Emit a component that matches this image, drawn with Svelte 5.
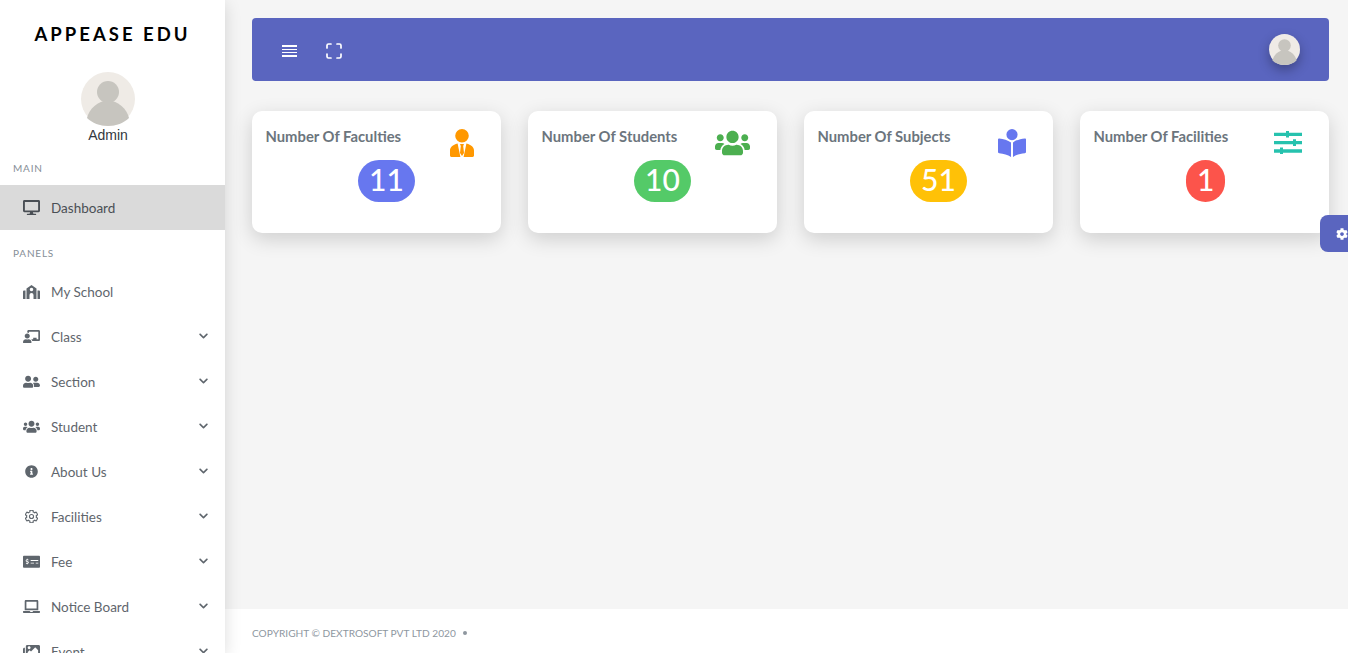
<script>
  // font awesome style shapes, one compound path each
  const icons = {
    desktop: { vb: '0 0 576 512', d: 'M528 0H48C21.5 0 0 21.5 0 48v320c0 26.5 21.5 48 48 48h192l-16 48h-72c-13.3 0-24 10.7-24 24s10.7 24 24 24h272c13.3 0 24-10.7 24-24s-10.7-24-24-24h-72l-16-48h192c26.5 0 48-21.5 48-48V48c0-26.5-21.5-48-48-48zm-16 352H64V64h448v288z' },
    school: { vb: '0 0 34 28', d: 'M0 13a2 2 0 0 1 2-2h3v17H1a1 1 0 0 1-1-1zM29 11h3a2 2 0 0 1 2 2v14a1 1 0 0 1-1 1h-4zM17 0l10 7v21h-6v-8a4 4 0 0 0-8 0v8H7V7zM17 5.500a3.500 3.500 0 1 0 0 7 3.500 3.500 0 0 0 0-7z' },
    teacher: { vb: '0 0 640 512', d: 'M208 352c-2.39 0-4.78.35-7.06 1.09C187.98 357.3 174.35 360 160 360c-14.35 0-27.98-2.7-40.95-6.91-2.28-.74-4.66-1.09-7.05-1.09C49.94 352-.33 402.48 0 464.62.14 490.88 21.73 512 48 512h224c26.27 0 47.86-21.12 48-47.38.33-62.14-49.94-112.62-112-112.62zm-48-32c53.02 0 96-42.98 96-96s-42.98-96-96-96-96 42.98-96 96 42.98 96 96 96zM592 0H208c-26.47 0-48 22.25-48 49.59V96c23.42 0 45.1 6.78 64 17.8V64h352v288h-64v-64H384v64h-76.24c19.1 16.69 33.12 38.73 39.69 64H592c26.47 0 48-22.25 48-49.59V49.59C640 22.25 618.47 0 592 0z' },
    friends: { vb: '0 0 640 512', d: 'M192 256c61.9 0 112-50.1 112-112S253.9 32 192 32 80 82.1 80 144s50.1 112 112 112zm76.8 32h-8.3c-20.8 10-43.9 16-68.5 16s-47.6-6-68.5-16h-8.3C51.6 288 0 339.6 0 403.2V432c0 26.5 21.5 48 48 48h288c26.5 0 48-21.5 48-48v-28.8c0-63.6-51.6-115.2-115.2-115.2zM480 256c53 0 96-43 96-96s-43-96-96-96-96 43-96 96 43 96 96 96zm48 32h-3.8c-13.9 4.8-28.6 8-44.2 8s-30.3-3.2-44.2-8H432c-20.4 0-39.2 5.9-55.7 15.4 24.4 26.3 39.7 61.2 39.7 99.8v38.4c0 2.2-.5 4.3-.6 6.4H592c26.5 0 48-21.5 48-48 0-61.9-50.1-112-112-112z' },
    users: { vb: '0 0 640 512', d: 'M96 224c35.3 0 64-28.7 64-64s-28.7-64-64-64-64 28.7-64 64 28.7 64 64 64zm448 0c35.3 0 64-28.7 64-64s-28.7-64-64-64-64 28.7-64 64 28.7 64 64 64zm32 32h-64c-17.6 0-33.5 7.1-45.1 18.6 40.3 22.1 68.9 62 75.1 109.4h66c17.7 0 32-14.3 32-32v-32c0-35.3-28.7-64-64-64zm-256 0c61.9 0 112-50.1 112-112S381.9 32 320 32 208 82.1 208 144s50.1 112 112 112zm76.8 32h-8.3c-20.8 10-43.9 16-68.5 16s-47.6-6-68.5-16h-8.3C179.6 288 128 339.6 128 403.2V432c0 26.5 21.5 48 48 48h288c26.5 0 48-21.5 48-48v-28.8c0-63.6-51.6-115.2-115.2-115.2zm-223.7-13.4C161.5 263.1 145.6 256 128 256H64c-35.3 0-64 28.7-64 64v32c0 17.7 14.3 32 32 32h65.9c6.3-47.4 34.9-87.3 75.2-109.4z' },
    info: { vb: '0 0 512 512', d: 'M256 8C119 8 8 119.1 8 256c0 137 111 248 248 248s248-111 248-248C504 119.1 393 8 256 8zm0 110c23.2 0 42 18.8 42 42s-18.8 42-42 42-42-18.8-42-42 18.8-42 42-42zm56 254c0 6.6-5.4 12-12 12h-88c-6.6 0-12-5.4-12-12v-24c0-6.6 5.4-12 12-12h12v-64h-12c-6.6 0-12-5.4-12-12v-24c0-6.6 5.4-12 12-12h64c6.6 0 12 5.4 12 12v100h12c6.6 0 12 5.4 12 12v24z' },
    cog: { vb: '0 0 512 512', d: 'M487.4 315.7l-42.6-24.6c4.3-23.2 4.3-47 0-70.2l42.6-24.6c4.9-2.8 7.1-8.6 5.5-14-11.1-35.6-30-67.8-54.7-94.6-3.8-4.1-10-5.1-14.8-2.3L380.8 110c-17.9-15.4-38.5-27.3-60.8-35.1V25.8c0-5.6-3.9-10.5-9.4-11.7-36.7-8.2-74.3-7.8-109.2 0-5.5 1.2-9.4 6.1-9.4 11.7V75c-22.2 7.9-42.8 19.8-60.8 35.1L88.7 85.5c-4.9-2.8-11-1.9-14.8 2.3-24.7 26.7-43.6 58.9-54.7 94.6-1.7 5.4.6 11.2 5.5 14L67.3 221c-4.3 23.2-4.3 47 0 70.2l-42.6 24.6c-4.9 2.8-7.1 8.6-5.5 14 11.1 35.6 30 67.8 54.7 94.6 3.8 4.1 10 5.1 14.8 2.3l42.6-24.6c17.9 15.4 38.5 27.3 60.8 35.1v49.2c0 5.6 3.9 10.5 9.4 11.7 36.7 8.2 74.3 7.8 109.2 0 5.5-1.2 9.4-6.1 9.4-11.7v-49.2c22.2-7.9 42.8-19.8 60.8-35.1l42.6 24.6c4.9 2.8 11 1.9 14.8-2.3 24.7-26.7 43.6-58.9 54.7-94.6 1.5-5.5-.7-11.3-5.6-14.1zM256 336c-44.1 0-80-35.9-80-80s35.9-80 80-80 80 35.9 80 80-35.9 80-80 80z' },
    money: { vb: '0 0 640 512', d: 'M608 32H32C14.33 32 0 46.33 0 64v384c0 17.67 14.33 32 32 32h576c17.67 0 32-14.33 32-32V64c0-17.67-14.33-32-32-32zM176 327.88V344c0 4.42-3.58 8-8 8h-16c-4.42 0-8-3.58-8-8v-16.29c-11.29-.58-22.27-4.52-31.37-11.35-3.9-2.93-4.1-8.77-.57-12.14l11.75-11.21c2.77-2.64 6.89-2.76 10.13-.73 3.87 2.42 8.26 3.72 12.82 3.72h28.11c6.5 0 11.8-5.92 11.8-13.19 0-5.95-3.61-11.19-8.77-12.73l-45-13.5c-18.59-5.58-31.58-23.42-31.58-43.39 0-24.52 19.05-44.44 42.67-45.07V152c0-4.42 3.58-8 8-8h16c4.42 0 8 3.58 8 8v16.29c11.29.58 22.27 4.51 31.37 11.35 3.9 2.93 4.1 8.77.57 12.14l-11.75 11.21c-2.77 2.64-6.89 2.76-10.13.73-3.87-2.43-8.26-3.72-12.82-3.72h-28.11c-6.5 0-11.8 5.92-11.8 13.19 0 5.95 3.61 11.19 8.77 12.73l45 13.5c18.59 5.58 31.58 23.42 31.58 43.39 0 24.53-19.05 44.44-42.67 45.07zM416 312c0 4.42-3.58 8-8 8H296c-4.42 0-8-3.58-8-8v-16c0-4.42 3.58-8 8-8h112c4.42 0 8 3.58 8 8v16zm160 0c0 4.42-3.58 8-8 8h-80c-4.42 0-8-3.58-8-8v-16c0-4.42 3.58-8 8-8h80c4.42 0 8 3.58 8 8v16zm0-96c0 4.42-3.58 8-8 8H296c-4.42 0-8-3.58-8-8v-16c0-4.42 3.58-8 8-8h272c4.42 0 8 3.58 8 8v16z' },
    laptop: { vb: '0 0 640 512', d: 'M624 416H381.54c-.74 19.81-14.71 32-32.74 32H288c-18.69 0-33.02-17.47-32.77-32H16c-8.8 0-16 7.2-16 16v16c0 35.2 28.8 64 64 64h512c35.2 0 64-28.8 64-64v-16c0-8.8-7.2-16-16-16zM576 48c0-26.4-21.6-48-48-48H112C85.6 0 64 21.6 64 48v336h512V48zm-64 272H128V64h384v256z' },
    images: { vb: '0 0 576 512', d: 'M480 416v16c0 26.51-21.49 48-48 48H48c-26.51 0-48-21.49-48-48V176c0-26.51 21.49-48 48-48h16v208c0 44.112 35.888 80 80 80h336zm96-80V80c0-26.51-21.49-48-48-48H144c-26.51 0-48 21.49-48 48v256c0 26.51 21.49 48 48 48h384c26.51 0 48-21.49 48-48zM256 128c0 26.51-21.49 48-48 48s-48-21.49-48-48 21.49-48 48-48 48 21.49 48 48zm-96 144l55.515-55.515c4.686-4.686 12.284-4.686 16.971 0L272 256l135.515-135.515c4.686-4.686 12.284-4.686 16.971 0L512 208v112H160v-48z' },
    chevron: { vb: '0 0 448 512', d: 'M207.029 381.476L12.686 187.132c-9.373-9.373-9.373-24.569 0-33.941l22.667-22.667c9.357-9.357 24.522-9.375 33.901-.04L224 284.505l154.745-154.021c9.379-9.335 24.544-9.317 33.901.04l22.667 22.667c9.373 9.373 9.373 24.569 0 33.941L240.971 381.476c-9.373 9.372-24.569 9.372-33.942 0z' },
    tie: { vb: '0 0 24 28', d: 'M12 0a6.800 6.800 0 1 1 0 13.600A6.800 6.800 0 0 1 12 0zM7.600 14.600L10.400 28H1.400C.6 28 0 27.400 0 26.600v-5.200c0-3 2.600-5.600 7.600-6.800zM16.400 14.600c5 1.200 7.600 3.800 7.600 6.800v5.200c0 .8-.6 1.400-1.400 1.400h-9zM10 15h4l-.8 2 .8 7-2 3-2-3 .8-7z' },
    reader: { vb: '0 0 28 28', d: 'M14 0a5.600 5.600 0 1 1 0 11.200A5.600 5.600 0 0 1 14 0zM0 10.400c0-.7.5-1.100 1.200-1 4.300.4 8.600 1.600 11.800 4V28C9.800 25.800 5.500 24.600 1.200 24.300.5 24.200 0 23.800 0 23.100zM28 10.400c0-.7-.5-1.100-1.200-1-4.300.4-8.600 1.600-11.800 4V28c3.200-2.200 7.500-3.400 11.800-3.700.7-.1 1.200-.5 1.200-1.200z' },
    sliders: { vb: '0 0 28 24', d: 'M0 1.700h12V0h3v1.700h13V5H15v1.500h-3V5H0zM0 10h19V8.300h3V10h6v3.300h-6V15h-3v-1.700H0zM0 18.300h6v-1.700h3v1.700h19v3.400H9V23H6v-1.300H0z' }
  }

  const menu = [
    { label: 'My School', icon: 'school' },
    { label: 'Class', icon: 'teacher', more: true },
    { label: 'Section', icon: 'friends', more: true },
    { label: 'Student', icon: 'users', more: true },
    { label: 'About Us', icon: 'info', more: true, small: true },
    { label: 'Facilities', icon: 'cog', more: true, small: true, line: true },
    { label: 'Fee', icon: 'money', more: true },
    { label: 'Notice Board', icon: 'laptop', more: true },
    { label: 'Event', icon: 'images', more: true }
  ]

  const cards = [
    { title: 'Number Of Faculties', num: 11, badge: '#6777ef', icon: 'tie', color: '#ff9800', w: 24 },
    { title: 'Number Of Students', num: 10, badge: '#54ca68', icon: 'users', color: '#4caf50', w: 35 },
    { title: 'Number Of Subjects', num: 51, badge: '#ffc107', icon: 'reader', color: '#6777ef', w: 28 },
    { title: 'Number Of Facilities', num: 1, badge: '#fc544b', icon: 'sliders', color: '#26c2ae', w: 28 }
  ]
</script>

{#snippet svg(name, cls)}
  <svg class={cls} viewBox={icons[name].vb} fill="currentColor" fill-rule="evenodd" aria-hidden="true"><path d={icons[name].d} /></svg>
{/snippet}

{#snippet avatar(cls)}
  <svg class={cls} viewBox="0 0 54 54" aria-hidden="true">
    <circle cx="27" cy="27" r="27" fill="#efebe6" />
    <circle cx="27" cy="20" r="11" fill="#c7c5bf" />
    <path d="M6 46C8 37 17 28.500 27 28.500S46 37 48 46C43 51 35 54 27 54S11 51 6 46z" fill="#c7c5bf" />
  </svg>
{/snippet}

<div class="page">
  <aside class="sidebar">
    <div class="logo">APPEASE EDU</div>
    <div class="user">
      {@render avatar('user-pic')}
      <div class="user-name">Admin</div>
    </div>

    <div class="menu-head first">MAIN</div>
    <a class="item active" href="#top">
      <span class="ic">{@render svg('desktop', 'ic-svg')}</span>
      <span>Dashboard</span>
    </a>

    <div class="menu-head">PANELS</div>
    {#each menu as m}
      <a class="item" href="#top">
        <span class="ic" class:small={m.small} class:line={m.line}>{@render svg(m.icon, 'ic-svg')}</span>
        <span>{m.label}</span>
        {#if m.more}
          {@render svg('chevron', 'chev')}
        {/if}
      </a>
    {/each}
  </aside>

  <div class="main">
    <div class="content">
      <header class="topbar">
        <div class="burger"><i></i><i></i><i></i><i></i></div>
        <svg class="full" viewBox="0 0 16 16" fill="none" stroke="#fff" stroke-width="1.700" stroke-linecap="round" aria-hidden="true">
          <path d="M1 5V2.500C1 1.700 1.700 1 2.500 1H5M11 1h2.500c.8 0 1.500.7 1.500 1.500V5M15 11v2.500c0 .8-.7 1.500-1.500 1.500H11M5 15H2.500C1.700 15 1 14.300 1 13.500V11" />
        </svg>
        <div class="top-user">{@render avatar('top-pic')}</div>
      </header>

      <div class="cards">
        {#each cards as c}
          <div class="card">
            <div class="card-top">
              <h5>{c.title}</h5>
              <span class="card-ic" style="color:{c.color};width:{c.w}px">{@render svg(c.icon, 'ic-svg')}</span>
            </div>
            <div class="badge" style="background:{c.badge}">{c.num}</div>
          </div>
        {/each}
      </div>
    </div>

    <footer class="footer">COPYRIGHT © DEXTROSOFT PVT LTD 2020 <span class="dot"></span></footer>
  </div>

  <div class="settings">{@render svg('cog', 'set-ic')}</div>
</div>

<style>
  :global(body) {
    background: #f5f5f5;
    overflow: hidden;
  }
  .page {
    display: flex;
    height: 100vh;
    font-family: Lato, "Noto Sans", sans-serif;
    color: #5f666d;
    overflow: hidden;
    position: relative;
  }

  /* sidebar */
  .sidebar {
    width: 225px;
    flex: none;
    background: #fff;
    box-shadow: 0 4px 16px rgba(0, 0, 0, .14);
    overflow: hidden;
    position: relative;
    z-index: 2;
  }
  .logo {
    margin-top: 22px;
    text-align: center;
    font-size: 18.500px;
    line-height: 24px;
    font-weight: 700;
    letter-spacing: 3px;
    color: #000;
  }
  .user {
    margin-top: 26px;
    display: flex;
    flex-direction: column;
    align-items: center;
    padding-right: 9px;
  }
  .user-name {
    font-family: "Liberation Sans", sans-serif;
    font-size: 14px;
    line-height: 18px;
    color: #33383d;
  }
  .menu-head {
    font-size: 10px;
    line-height: 14px;
    letter-spacing: .8px;
    color: #868e96;
    padding: 16px 0 9px 13px;
  }
  .menu-head.first {
    padding-top: 17px;
    padding-bottom: 10px;
  }
  .item {
    display: flex;
    align-items: center;
    height: 45px;
    padding-left: 23px;
    font-size: 13.500px;
    color: #5f666d;
    text-decoration: none;
    position: relative;
  }
  .item.active {
    background: #dadada;
    color: #4a4f55;
  }
  .ic {
    width: 17px;
    height: 17px;
    margin-right: 11px;
    display: flex;
    align-items: center;
    justify-content: center;
    flex: none;
  }
  .ic.small .ic-svg {
    width: 13px;
  }
  .ic.line path {
    fill: none;
    stroke: currentColor;
    stroke-width: 44px;
  }
  .ic-svg {
    width: 100%;
    display: block;
  }
  .chev {
    width: 9px;
    height: 10px;
    position: absolute;
    left: 198.500px;
    top: 17px;
  }

  /* main */
  .main {
    flex: 1;
    min-width: 0;
    display: flex;
    flex-direction: column;
  }
  .content {
    flex: 1;
    padding: 18px 19px 0 27px;
  }
  .topbar {
    height: 63px;
    background: #5a65bf;
    border-radius: 4px;
    display: flex;
    align-items: center;
    padding: 0 29px 0 30px;
  }
  .burger {
    width: 15px;
    display: flex;
    flex-direction: column;
    gap: 1.700px;
    margin: 3px 29px 0 0;
  }
  .burger i {
    display: block;
    height: 1.500px;
    background: #fff;
  }
  .full {
    width: 16px;
    height: 16px;
    margin-top: 3px;
  }
  .top-user {
    margin-left: auto;
    width: 31px;
    height: 31px;
    border-radius: 50%;
    box-shadow: 0 5px 12px rgba(0, 0, 0, .3);
  }
  .top-pic {
    display: block;
    width: 31px;
    height: 31px;
  }
  .user-pic {
    display: block;
    width: 54px;
    height: 54px;
  }
  .cards {
    display: grid;
    grid-template-columns: repeat(4, 1fr);
    gap: 27px;
    margin-top: 30px;
  }
  .card {
    height: 122px;
    box-sizing: border-box;
    background: #fff;
    border-radius: 10px;
    box-shadow: 0 6px 20px rgba(0, 0, 0, .16);
    padding: 17px 27px 0 13.500px;
  }
  .card-top {
    display: flex;
    justify-content: space-between;
    align-items: flex-start;
    height: 32px;
  }
  h5 {
    margin: 0;
    font-size: 14.800px;
    line-height: 17px;
    font-weight: 700;
    color: #6c757d;
  }
  .card-ic {
    display: flex;
    align-items: center;
    height: 28px;
    margin-top: 1px;
  }
  .badge {
    display: inline-block;
    min-width: 15px;
    margin-left: 92.500px;
    padding: 0 11px;
    height: 42px;
    line-height: 38px;
    border-radius: 21px;
    text-align: center;
    color: #fff;
    font-size: 30px;
    font-weight: 500;
  }

  .footer {
    height: 44px;
    box-sizing: border-box;
    flex: none;
    background: #fff;
    display: flex;
    align-items: center;
    padding: 4px 0 0 27px;
    font-size: 10.150px;
    color: #8e979f;
  }
  .dot {
    width: 4px;
    height: 4px;
    border-radius: 50%;
    background: #8e979f;
    margin-left: 7px;
  }

  .settings {
    position: absolute;
    right: 0;
    top: 215px;
    width: 28px;
    height: 37px;
    background: #5a65bf;
    border-radius: 8px 0 0 8px;
    z-index: 3;
    overflow: hidden;
    color: #fff;
  }
  .set-ic {
    position: absolute;
    left: 16px;
    top: 13px;
    width: 12px;
    height: 12px;
  }
</style>
